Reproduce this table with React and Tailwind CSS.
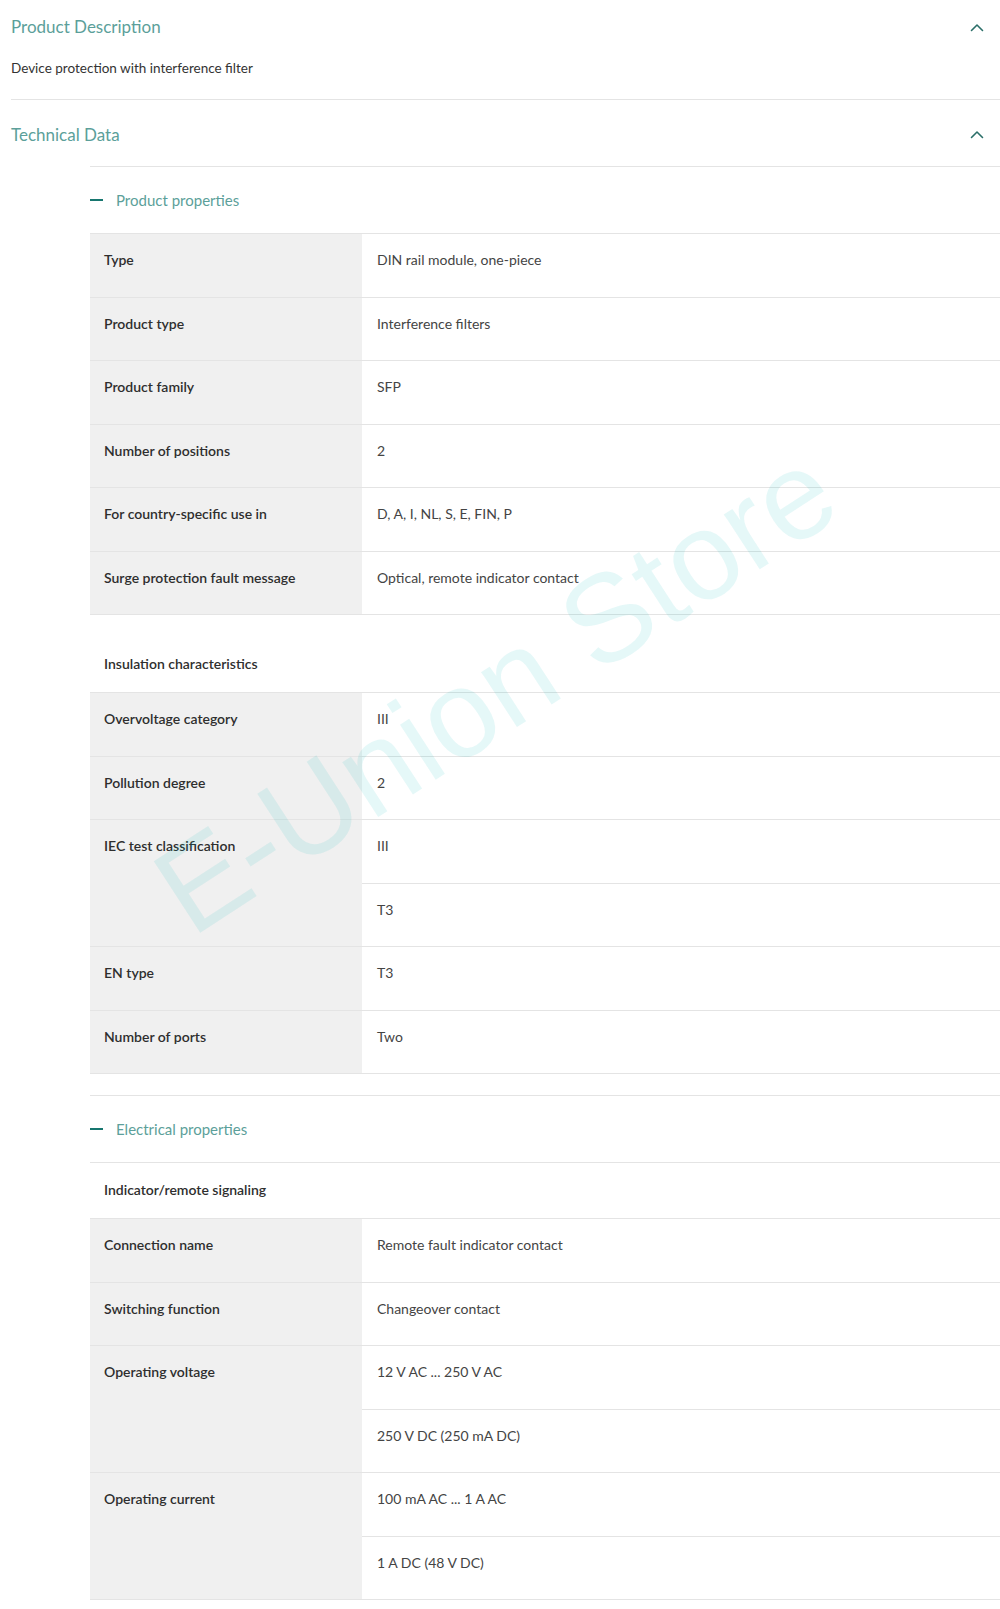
import React from 'react';

const productRows = [
  { label: 'Type', values: ['DIN rail module, one-piece'] },
  { label: 'Product type', values: ['Interference filters'] },
  { label: 'Product family', values: ['SFP'] },
  { label: 'Number of positions', values: ['2'] },
  { label: 'For country-specific use in', values: ['D, A, I, NL, S, E, FIN, P'] },
  { label: 'Surge protection fault message', values: ['Optical, remote indicator contact'] },
];

const insulationRows = [
  { label: 'Overvoltage category', values: ['III'] },
  { label: 'Pollution degree', values: ['2'] },
  { label: 'IEC test classification', values: ['III', 'T3'] },
  { label: 'EN type', values: ['T3'] },
  { label: 'Number of ports', values: ['Two'] },
];

const electricalRows = [
  { label: 'Connection name', values: ['Remote fault indicator contact'] },
  { label: 'Switching function', values: ['Changeover contact'] },
  { label: 'Operating voltage', values: ['12 V AC ... 250 V AC', '250 V DC (250 mA DC)'] },
  { label: 'Operating current', values: ['100 mA AC ... 1 A AC', '1 A DC (48 V DC)'] },
];

function Chevron() {
  return (
    <svg width="14" height="9" viewBox="0 0 14 9" fill="none">
      <polyline points="1.5,7.5 7,2 12.5,7.5" stroke="#2b6f69" strokeWidth="1.6" strokeLinecap="round" strokeLinejoin="round" />
    </svg>
  );
}

function Row({ label, values }) {
  return (
    <div className="flex border-b border-[#e4e4e4]">
      <div className="w-[272px] shrink-0 bg-[#f0f0f0] pl-[14px] pt-[16px] text-[14px] leading-5 font-semibold text-[#2e2e2e]">
        {label}
      </div>
      <div className="flex-1 flex flex-col">
        {values.map((v, i) => (
          <div
            key={i}
            className={
              i < values.length - 1
                ? 'h-[63.5px] pl-[15px] pt-[16px] text-[14px] leading-5 text-[#444] border-b border-[#e4e4e4]'
                : 'h-[62.5px] pl-[15px] pt-[16px] text-[14px] leading-5 text-[#444]'
            }
          >
            {v}
          </div>
        ))}
      </div>
    </div>
  );
}

function GroupHeader({ children, extra }) {
  return (
    <div className={`h-[56px] flex items-center pl-[14px] pb-[3px] border-b border-[#e4e4e4] text-[14px] font-semibold text-[#2e2e2e] ${extra || ''}`}>
      {children}
    </div>
  );
}

function SubSection({ title, children }) {
  return (
    <div className="border-t border-[#e4e4e4]">
      <div className="h-[66px] flex items-center">
        <span className="w-[13px] h-[2px] bg-[#17766f]" />
        <span className="ml-[13px] text-[15px] text-[#5c9f9a]">{title}</span>
      </div>
      {children}
    </div>
  );
}

export default function App() {
  return (
    <div className="relative w-[1000px] min-h-[1609px] bg-white overflow-hidden" style={{ fontFamily: 'Lato, "Open Sans", sans-serif' }}>
      <div className="pl-[11px]">
        {/* Product description */}
        <div className="h-[54px] flex items-center justify-between pr-[16px]">
          <span className="text-[17px] text-[#5c9f9a]">Product Description</span>
          <Chevron />
        </div>
        <div className="pt-[4px] pb-[21px] border-b border-[#e4e4e4] text-[13.5px] leading-5 text-[#333]">
          Device protection with interference filter
        </div>

        {/* Technical data */}
        <div className="h-[66px] pt-[3px] flex items-center justify-between pr-[16px]">
          <span className="text-[17px] text-[#5c9f9a]">Technical Data</span>
          <Chevron />
        </div>

        <div className="ml-[79px]">
          <SubSection title="Product properties">
            <div className="border-t border-[#e4e4e4]">
              {productRows.map((r) => (
                <Row key={r.label} {...r} />
              ))}
              <GroupHeader extra="mt-[22px]">Insulation characteristics</GroupHeader>
              {insulationRows.map((r) => (
                <Row key={r.label} {...r} />
              ))}
            </div>
            <div className="h-[21px]" />
          </SubSection>

          <SubSection title="Electrical properties">
            <div className="border-t border-[#e4e4e4]">
              <GroupHeader>Indicator/remote signaling</GroupHeader>
              {electricalRows.map((r) => (
                <Row key={r.label} {...r} />
              ))}
            </div>
          </SubSection>
        </div>
      </div>

      {/* watermark */}
      <div className="pointer-events-none absolute left-[495px] top-[690px] -translate-x-1/2 -translate-y-1/2 -rotate-[33deg] whitespace-nowrap text-[124px] leading-none text-[rgba(0,190,190,0.1)]" style={{ fontFamily: '"Liberation Sans", Arial, sans-serif' }}>
        E-Union Store
      </div>
    </div>
  );
}
